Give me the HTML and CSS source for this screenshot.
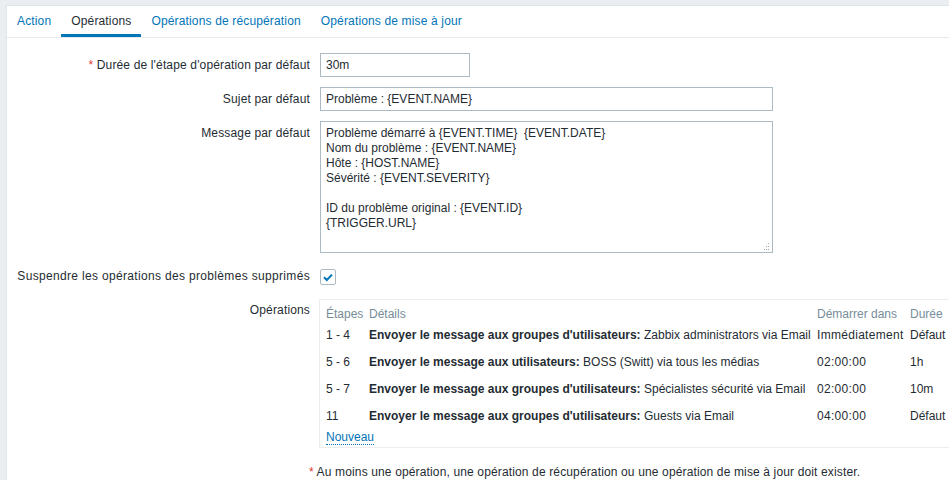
FILE: index.html
```html
<!DOCTYPE html>
<html lang="fr">
<head>
<meta charset="utf-8">
<title>Opérations</title>
<link rel="stylesheet" href="styles.css">
</head>
<body>
<div class="wrap">
  <ul class="tabs">
    <li class="tab"><a href="#">Action</a></li>
    <li class="tab active"><span>Opérations</span></li>
    <li class="tab"><a href="#">Opérations de récupération</a></li>
    <li class="tab"><a href="#">Opérations de mise à jour</a></li>
  </ul>
  <div class="form">
    <div class="lbl"><span class="req">*</span> Durée de l'étape d'opération par défaut</div>
    <div class="fld"><input class="inp short" type="text" value="30m"></div>

    <div class="lbl">Sujet par défaut</div>
    <div class="fld"><input class="inp long" type="text" value="Problème : {EVENT.NAME}"></div>

    <div class="lbl">Message par défaut</div>
    <div class="fld">
      <div class="ta-wrap">
        <textarea class="ta">Problème démarré à {EVENT.TIME}  {EVENT.DATE}
Nom du problème : {EVENT.NAME}
Hôte : {HOST.NAME}
Sévérité : {EVENT.SEVERITY}

ID du problème original : {EVENT.ID}
{TRIGGER.URL}</textarea>
        <svg class="grip" width="5" height="7" viewBox="0 0 5 7"><rect x="4" y="0" width="1" height="1"/><rect x="2" y="3" width="1" height="1"/><rect x="4" y="3" width="1" height="1"/><rect x="0" y="6" width="1" height="1"/><rect x="2" y="6" width="1" height="1"/><rect x="4" y="6" width="1" height="1"/></svg>
      </div>
    </div>

    <div class="lbl lbl-cb">Suspendre les opérations des problèmes supprimés</div>
    <div class="fld fld-cb">
      <span class="cb"><svg width="14" height="14" viewBox="0 0 14 14"><polyline points="3,7.2 5.8,10 11,4.6" fill="none" stroke="#0275b8" stroke-width="2"/></svg></span>
    </div>

    <div class="lbl lbl-ops">Opérations</div>
    <div class="fld">
      <div class="ops">
        <table class="ops-table">
          <colgroup>
            <col class="c-step"><col class="c-det"><col class="c-start"><col class="c-dur">
          </colgroup>
          <thead>
            <tr><th>Étapes</th><th>Détails</th><th>Démarrer dans</th><th>Durée</th></tr>
          </thead>
          <tbody>
            <tr><td>1 - 4</td><td><b>Envoyer le message aux groupes d'utilisateurs:</b> Zabbix administrators via Email</td><td class="start">Immédiatement</td><td>Défaut</td></tr>
            <tr><td>5 - 6</td><td><b>Envoyer le message aux utilisateurs:</b> BOSS (Switt) via tous les médias</td><td class="start">02:00:00</td><td>1h</td></tr>
            <tr><td>5 - 7</td><td><b>Envoyer le message aux groupes d'utilisateurs:</b> Spécialistes sécurité via Email</td><td class="start">02:00:00</td><td>10m</td></tr>
            <tr><td>11</td><td><b>Envoyer le message aux groupes d'utilisateurs:</b> Guests via Email</td><td class="start">04:00:00</td><td>Défaut</td></tr>
          </tbody>
        </table>
        <a class="new" href="#">Nouveau</a>
      </div>
    </div>

    <div class="lbl"></div>
    <div class="fld note"><span class="req">*</span> Au moins une opération, une opération de récupération ou une opération de mise à jour doit exister.</div>
  </div>
</div>
</body>
</html>
```

FILE: styles.css
```css
html, body {
  overflow: hidden;
}
body {
  margin: 0;
  background: #ebeef0;
  font-family: "Liberation Sans", Arial, sans-serif;
  font-size: 12px;
  color: #1f2c33;
}
.wrap {
  box-sizing: border-box;
  margin: 5px 0 0 6px;
  border-top: 1px solid #dfe4e7;
  border-left: 1px solid #dfe4e7;
  background: #fff;
  height: calc(100vh - 5px);
  overflow: hidden;
}
.tabs {
  list-style: none;
  margin: 0;
  padding: 0;
  display: flex;
  height: 31px;
  border-bottom: 1px solid #e6eaed;
  letter-spacing: 0.15px;
}
.tab {
  padding: 0 10px;
  line-height: 31px;
  height: 28px;
  border-bottom: 3px solid transparent;
}
.tab a {
  color: #0275b8;
  text-decoration: none;
}
.tab.active {
  border-bottom-color: #0275b8;
  color: #1f2c33;
}
.form {
  display: grid;
  grid-template-columns: 303px minmax(0, 1fr);
  column-gap: 10px;
  row-gap: 10px;
  padding-top: 15px;
}
.lbl {
  text-align: right;
  line-height: 24px;
  white-space: nowrap;
  letter-spacing: 0.15px;
}
.lbl-cb {
  line-height: 26px;
  letter-spacing: 0.33px;
}
.lbl-ops {
  line-height: 14px;
  padding-top: 4px;
}
.req {
  color: #e33734;
}
.fld {
  min-width: 0;
}
.inp {
  box-sizing: border-box;
  height: 24px;
  border: 1px solid #acbbc3;
  padding: 0 5px;
  font-family: "Liberation Sans", Arial, sans-serif;
  font-size: 12px;
  color: #1f2c33;
  background: #fff;
  margin: 0;
  display: block;
}
.short { width: 150px; }
.long { width: 453px; }
.ta-wrap {
  position: relative;
  width: 453px;
}
.ta {
  display: block;
  box-sizing: border-box;
  width: 453px;
  height: 132px;
  margin: 0;
  border: 1px solid #acbbc3;
  padding: 4px 5px;
  font-family: "Liberation Sans", Arial, sans-serif;
  font-size: 12px;
  line-height: 15px;
  color: #1f2c33;
  resize: none;
  overflow: hidden;
}
.grip {
  position: absolute;
  right: 4px;
  bottom: 3px;
  fill: #9aa7ae;
}
.fld-cb {
  display: flex;
  align-items: center;
  height: 26px;
}
.cb {
  box-sizing: border-box;
  width: 16px;
  height: 16px;
  border: 1px solid #acbbc3;
  border-radius: 2px;
  display: flex;
  align-items: center;
  justify-content: center;
  margin-top: 1px;
}
.ops {
  box-sizing: border-box;
  margin-left: -1px;
  width: 640px;
  border: 1px solid #ebeef0;
  border-right: 0;
  padding: 7px 0 2px 6px;
}
.ops-table {
  border-collapse: collapse;
  table-layout: fixed;
  width: 634px;
}
.c-step { width: 43px; }
.c-det { width: 448px; }
.c-start { width: 93px; }
.c-dur { width: 50px; }
.ops-table th {
  text-align: left;
  font-weight: normal;
  color: #768d99;
  padding: 0 0 1px;
  line-height: 14px;
  white-space: nowrap;
}
.ops-table td {
  padding: 6px 0;
  line-height: 15px;
  white-space: nowrap;
  vertical-align: top;
}
.ops-table td.start {
  letter-spacing: 0.3px;
}
.new {
  display: inline-block;
  color: #0275b8;
  text-decoration: none;
  line-height: 14px;
  border-bottom: 1px dotted #0275b8;
  margin-top: 0;
}
.note {
  margin-left: -11px;
  margin-top: 7px;
  line-height: 14px;
  white-space: nowrap;
  letter-spacing: 0.14px;
}
```
